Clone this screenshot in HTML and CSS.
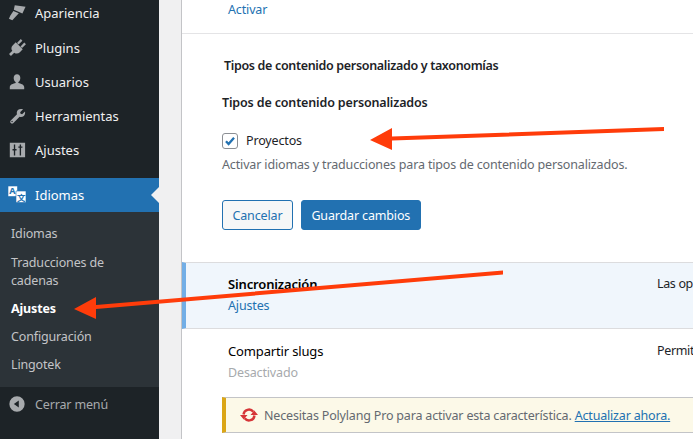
FILE: index.html
```html
<!DOCTYPE html>
<html lang="es">
<head>
  <meta charset="UTF-8" />
  <title>Ajustes - Idiomas</title>
  <link rel="stylesheet" href="styles.css">
</head>
<body>

  <nav class="sidebar">
    <ul class="menu">
      <li class="menu-item">
        <svg class="menu-icon" viewBox="0 0 20 20"><path d="M7.500 1.500 19.500 3 16 10.500 6.500 6.500z"/><path d="M6 7.800 12 10.300 4.800 18 1 16.500 2.500 13z"/></svg>
        <span>Apariencia</span>
      </li>
      <li class="menu-item">
        <svg class="menu-icon" viewBox="0 0 20 20"><g transform="rotate(45 10 10)"><path d="M4.500 6.500h11V11a5 5 0 0 1-4 4.900V21h-3v-5.100a5 5 0 0 1-4-4.900z"/><rect x="6" y="0" width="2.500" height="6"/><rect x="11.500" y="0" width="2.500" height="6"/></g></svg>
        <span>Plugins</span>
      </li>
      <li class="menu-item">
        <svg class="menu-icon" viewBox="0 0 20 20"><path d="M10 1.500c2.200 0 3.700 1.800 3.700 4 0 2.100-1 3.800-2.200 4.500v1c2.500.8 6.500 1.700 6.500 4.500v2.500H2v-2.500c0-2.800 4-3.700 6.500-4.500v-1C7.300 9.300 6.300 7.600 6.300 5.500c0-2.200 1.500-4 3.700-4z"/></svg>
        <span>Usuarios</span>
      </li>
      <li class="menu-item">
        <svg class="menu-icon" viewBox="0 0 20 20"><path d="M16.700 2.600 13.500 5.800l.5 1.700 1.700.5 3.200-3.100c.4 2-.1 3.800-1.300 5-1.300 1.200-3.100 1.500-4.700 1L6 17.800c-.8.800-2.100.8-2.900 0-.8-.8-.8-2.100 0-2.900L10 8c-.5-1.600-.2-3.400 1-4.700 1.300-1.200 3.700-1.600 5.700-.7zM4.500 15.300a.8.8 0 1 0 0 1.600.8.8 0 0 0 0-1.600z"/></svg>
        <span>Herramientas</span>
      </li>
      <li class="menu-item">
        <svg class="menu-icon" viewBox="0 0 20 20"><path fill-rule="evenodd" d="M2 2h17v16H2zM6.500 4v5H5v1.500h1.500V16H8v-5.500h1.500V9H8V4zm6.500 0v2h-1.500v1.500H13V16h1.500V7.500H16V6h-1.500V4z"/></svg>
        <span>Ajustes</span>
      </li>
      <li class="menu-item is-current">
        <svg class="lang-icon" viewBox="0 0 20 20">
          <path class="lang-back" d="M1 1h9.500v10.500H1z"/>
          <text class="lang-a" x="2.300" y="9">A</text>
          <path class="lang-back" d="M9 6h10v11.500H9z"/>
          <text class="lang-b" x="10" y="15.500">文</text>
        </svg>
        <span>Idiomas</span>
      </li>
    </ul>
    <ul class="submenu">
      <li>Idiomas</li>
      <li>Traducciones de cadenas</li>
      <li class="is-active">Ajustes</li>
      <li>Configuración</li>
      <li>Lingotek</li>
    </ul>
    <div class="collapse">
      <svg class="menu-icon" viewBox="0 0 20 20"><path fill-rule="evenodd" d="M10 1.500a8.500 8.500 0 1 1 0 17 8.500 8.500 0 0 1 0-17zM12 6l-5.500 4 5.500 4z"/></svg>
      <span>Cerrar menú</span>
    </div>
  </nav>

  <main class="content">
    <div class="row-top"><a class="link" href="#">Activar</a></div>

    <form class="settings">
      <h2 class="settings-title">Tipos de contenido personalizado y taxonomías</h2>
      <h4 class="settings-sub">Tipos de contenido personalizados</h4>
      <label class="check-row">
        <span class="check">
          <svg viewBox="0 0 16 16"><path d="M3.400 8.200 6.400 11.400 12.600 4.200"/></svg>
        </span>
        Proyectos
      </label>
      <p class="desc">Activar idiomas y traducciones para tipos de contenido personalizados.</p>
      <div class="actions">
        <button type="button" class="btn">Cancelar</button>
        <button type="button" class="btn btn-primary">Guardar cambios</button>
      </div>
    </form>

    <div class="module is-on">
      <div class="module-name">
        <strong>Sincronización</strong>
        <a class="link" href="#">Ajustes</a>
      </div>
      <div class="module-text">Las op</div>
    </div>

    <div class="module module-last">
      <div class="module-name">
        <strong>Compartir slugs</strong>
        <span class="muted">Desactivado</span>
      </div>
      <div class="module-text">Permit</div>
    </div>

    <div class="notice">
      <svg class="notice-icon" viewBox="0 0 18 14">
        <path class="sync-arc" d="M3.500 6.500A5.500 5.500 0 0 1 13.300 3.700"/>
        <path class="sync-arc" d="M14.500 7.500A5.500 5.500 0 0 1 4.700 10.300"/>
        <path d="M10.500 7 18 7 14.300 2.500zM0 7 7.500 7 3.700 11.500z"/>
      </svg>
      <span>Necesitas Polylang Pro para activar esta característica. <a class="notice-link" href="#">Actualizar ahora.</a></span>
    </div>
  </main>

  <!-- annotation arrows on top of the screenshot -->
  <svg class="arrows" viewBox="0 0 693 439">
    <path d="M664 127 392 136.500V128L370 140 392 150V140.500L664 131z"/>
    <path d="M503 270.500 96 305V297L74 309 96 319V309L503 274.500z"/>
  </svg>

</body>
</html>
```

FILE: styles.css
```css
html, body {
  margin: 0;
  padding: 0;
  height: 100%;
  overflow: hidden;
}
body {
  display: flex;
  background: #f0f0f1;
  font-family: "Noto Sans", Arial, sans-serif;
  font-size: 12.5px;
  letter-spacing: -0.15px;
  color: #1d2327;
}
ul {
  list-style: none;
  margin: 0;
  padding: 0;
}

/* sidebar */
.sidebar {
  width: 159px;
  height: 439px;
  flex-shrink: 0;
  display: flex;
  flex-direction: column;
  background: #1d2327;
  color: #f0f0f1;
}
.menu {
  margin-top: -4px;
}
.menu-item {
  display: flex;
  align-items: center;
  gap: 9px;
  height: 34px;
  padding-left: 8px;
  position: relative;
  font-size: 13px;
  letter-spacing: 0;
}
.menu-item:first-child {
  padding-bottom: 1px;
}
.menu-item:nth-child(5) {
  margin-bottom: 11px;
}
.menu-icon {
  width: 18px;
  height: 18px;
  fill: #a7aaad;
  flex-shrink: 0;
}
.is-current {
  background: #2271b1;
  color: #fff;
  gap: 8px;
  padding-left: 7px;
}
.is-current::after {
  content: "";
  position: absolute;
  right: 0;
  top: 9px;
  border: 8px solid transparent;
  border-right-color: #f0f0f1;
  border-left-width: 0;
}
.lang-icon {
  width: 20px;
  height: 20px;
  flex-shrink: 0;
}
.lang-back {
  fill: #fff;
  stroke: #2271b1;
  stroke-width: 0.6;
}
.lang-a {
  font-family: "Noto Sans", sans-serif;
  font-size: 9px;
  font-weight: 700;
  fill: #2271b1;
}
.lang-b {
  font-family: "Noto Sans CJK SC", sans-serif;
  font-size: 8.5px;
  font-weight: 700;
  fill: #2271b1;
}
.submenu {
  background: #2c3338;
  height: 159px;
  padding: 9px 0 7px;
  color: #c3c4c7;
}
.submenu li {
  padding: 4px 30px 5px 11px;
  line-height: 18px;
  margin-bottom: 1px;
}
.submenu li:first-child {
  padding-bottom: 6px;
}
.submenu .is-active {
  color: #fff;
  font-weight: 700;
}
.collapse {
  display: flex;
  align-items: center;
  gap: 9px;
  padding: 8px 0 0 8px;
  color: #a7aaad;
}

/* content */
.content {
  flex: 1;
  min-width: 0;
  margin-left: 22px;
  height: 439px;
  background: #fff;
  border-left: 1px solid #c3c4c7;
  white-space: nowrap;
  overflow: hidden;
}
.link {
  color: #2271b1;
  text-decoration: none;
}
.row-top {
  height: 34px;
  padding: 1px 0 0 46px;
  line-height: 18px;
  box-sizing: border-box;
  border-bottom: 1px solid #e4e4e6;
}
.settings {
  height: 228px;
  box-sizing: border-box;
  padding: 23px 0 0 40px;
}
.settings-title {
  margin: 0 0 19px 2px;
  font-size: 12.5px;
  font-weight: 600;
  letter-spacing: -0.33px;
  line-height: 18px;
}
.settings-sub {
  margin: 0 0 21px;
  font-size: 12.5px;
  font-weight: 600;
  line-height: 18px;
}
.check-row {
  display: flex;
  align-items: center;
  gap: 8px;
  line-height: 16px;
}
.check {
  width: 14px;
  height: 14px;
  border: 1px solid #8c8f94;
  border-radius: 3px;
  display: block;
}
.check svg {
  display: block;
  width: 14px;
  height: 14px;
  fill: none;
  stroke: #2271b1;
  stroke-width: 2.600;
}
.desc {
  margin: 7px 0 0;
  line-height: 18px;
  color: #646970;
}
.actions {
  display: flex;
  gap: 8px;
  margin-top: 26px;
}
.btn {
  height: 30px;
  padding: 0 9.5px;
  font: inherit;
  letter-spacing: inherit;
  color: #2271b1;
  background: #f6f7f7;
  border: 1px solid #2271b1;
  border-radius: 3px;
}
.btn-primary {
  background: #2271b1;
  color: #fff;
}
.module {
  display: flex;
  height: 67px;
  box-sizing: border-box;
  border-top: 1px solid #dcdcde;
  padding: 12px 0 0 46px;
  line-height: 18px;
}
.module.is-on {
  background: #f0f6fc;
  border-bottom: 1px solid #dcdcde;
  border-left: 4px solid #72aee6;
  padding-left: 42px;
}
.module-last {
  border-top: 0;
  height: 68px;
  padding-top: 13px;
}
.module-name {
  width: 429px;
  flex-shrink: 0;
  display: flex;
  flex-direction: column;
  gap: 4px;
}
.module-name strong {
  font-size: 13px;
  font-weight: 400;
  color: #000;
}
.is-on .module-name strong {
  font-weight: 600;
}
.module-text {
  letter-spacing: -0.35px;
  color: #1d2327;
}
.muted {
  color: #a7aaad;
}
.notice {
  display: flex;
  align-items: center;
  gap: 6px;
  margin-left: 40px;
  height: 36px;
  box-sizing: border-box;
  padding-left: 14px;
  background: #fcf9e8;
  border: 1px solid #c3c4c7;
  border-left: 4px solid #dba617;
  border-right: 0;
  letter-spacing: -0.18px;
  color: #646970;
}
.notice-icon {
  width: 18px;
  height: 14px;
  fill: #d63638;
  flex-shrink: 0;
}
.sync-arc {
  fill: none;
  stroke: #d63638;
  stroke-width: 2.4;
}
.notice-link {
  color: #2271b1;
}

/* arrows drawn over the page */
.arrows {
  position: absolute;
  left: 0;
  top: 0;
  width: 693px;
  height: 439px;
  fill: #ff3c0a;
  pointer-events: none;
}
```
